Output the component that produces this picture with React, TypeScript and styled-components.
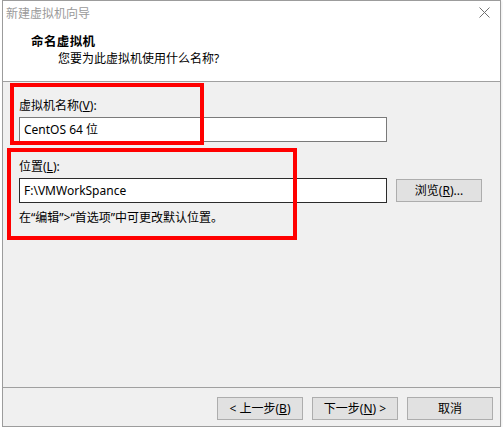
import React from "react";
import styled, { createGlobalStyle } from "styled-components";

const GlobalStyle = createGlobalStyle`
  html, body { margin: 0; padding: 0; background: #ffffff; }
  body {
    font-family: "Noto Sans", "Noto Sans CJK SC", sans-serif;
    font-size: 12px;
    color: #000;
  }
`;

const Window = styled.div`
  position: relative;
  box-sizing: border-box;
  margin-left: 2px;
  width: 499px;
  height: 427px;
  border: 1px solid #9c9c9c;
  background: #f0f0f0;
  display: flex;
  flex-direction: column;
  box-shadow: 1px 1px 2px rgba(0, 0, 0, 0.08);
`;

const TitleBar = styled.div`
  height: 30px;
  background: #fff;
  display: flex;
  justify-content: space-between;
  align-items: flex-start;
  padding: 5px 10px 0 3px;
  box-sizing: border-box;
`;

const TitleText = styled.span`
  color: #9a9a9a;
  line-height: 16px;
  font-size: 12px;
`;

const CloseIcon = styled.svg`
  margin-top: 1px;
  width: 11px;
  height: 11px;
`;

const Header = styled.div`
  height: 50px;
  background: #fff;
  padding: 3px 0 0 28px;
  box-sizing: border-box;
  display: flex;
  flex-direction: column;
  gap: 1px;
`;

const HeaderTitle = styled.div`
  font-weight: bold;
  font-size: 12.5px;
  line-height: 16px;
  letter-spacing: 0.4px;
`;

const HeaderSub = styled.div`
  padding-left: 27px;
  line-height: 16px;
`;

const Separator = styled.div`
  height: 1px;
  background: #a0a0a0;
  flex: none;
`;

const Body = styled.div`
  flex: 1;
  padding: 16px 0 0 16px;
  display: flex;
  flex-direction: column;
`;

const Field = styled.div<{ $gapTop?: number }>`
  display: flex;
  flex-direction: column;
  margin-top: ${(p) => p.$gapTop ?? 0}px;
`;

const Label = styled.div`
  line-height: 16px;
  margin-bottom: 3px;
`;

const Row = styled.div`
  display: flex;
  align-items: center;
  gap: 9px;
`;

const TextBox = styled.div<{ $dark?: boolean }>`
  box-sizing: border-box;
  width: 368px;
  height: 25px;
  background: #fff;
  border: 1px solid ${(p) => (p.$dark ? "#2b2b2b" : "#7a7a7a")};
  padding: 0 4px;
  display: flex;
  align-items: center;
  font-size: 12px;
  line-height: 16px;
`;

const Hint = styled.div`
  margin-top: 7px;
  line-height: 16px;
`;

const Button = styled.div`
  box-sizing: border-box;
  width: 86px;
  height: 23px;
  background: #e1e1e1;
  border: 1px solid #adadad;
  display: flex;
  align-items: center;
  justify-content: center;
  line-height: 16px;
  font-size: 12px;
`;

const Footer = styled.div`
  height: 38px;
  display: flex;
  justify-content: flex-end;
  align-items: flex-start;
  gap: 9px;
  padding: 9px 7px 0 0;
  box-sizing: border-box;
`;

const Annotation = styled.div<{ $l: number; $t: number; $w: number; $h: number }>`
  position: absolute;
  left: ${(p) => p.$l}px;
  top: ${(p) => p.$t}px;
  width: ${(p) => p.$w}px;
  height: ${(p) => p.$h}px;
  box-sizing: border-box;
  border: 4px solid #ff0000;
  pointer-events: none;
`;

export default function App() {
  return (
    <>
      <GlobalStyle />
      <Window>
        <TitleBar>
          <TitleText>新建虚拟机向导</TitleText>
          <CloseIcon viewBox="0 0 11 11">
            <path d="M0.5 0.5 L10.5 10.5 M10.5 0.5 L0.5 10.5" stroke="#707070" strokeWidth="1" fill="none" />
          </CloseIcon>
        </TitleBar>
        <Header>
          <HeaderTitle>命名虚拟机</HeaderTitle>
          <HeaderSub>您要为此虚拟机使用什么名称?</HeaderSub>
        </Header>
        <Separator />
        <Body>
          <Field>
            <Label>
              虚拟机名称(<u>V</u>):
            </Label>
            <TextBox>CentOS 64 位</TextBox>
          </Field>
          <Field $gapTop={17}>
            <Label>
              位置(<u>L</u>):
            </Label>
            <Row>
              <TextBox $dark>F:\VMWorkSpance</TextBox>
              <Button>
                浏览(<u>R</u>)...
              </Button>
            </Row>
            <Hint>在“编辑”&gt;“首选项”中可更改默认位置。</Hint>
          </Field>
        </Body>
        <Separator />
        <Footer>
          <Button>
            &lt; 上一步(<u>B</u>)
          </Button>
          <Button>
            下一步(<u>N</u>) &gt;
          </Button>
          <Button>取消</Button>
        </Footer>
        <Annotation $l={7} $t={82} $w={194} $h={62} />
        <Annotation $l={4} $t={147} $w={290} $h={92} />
      </Window>
    </>
  );
}
